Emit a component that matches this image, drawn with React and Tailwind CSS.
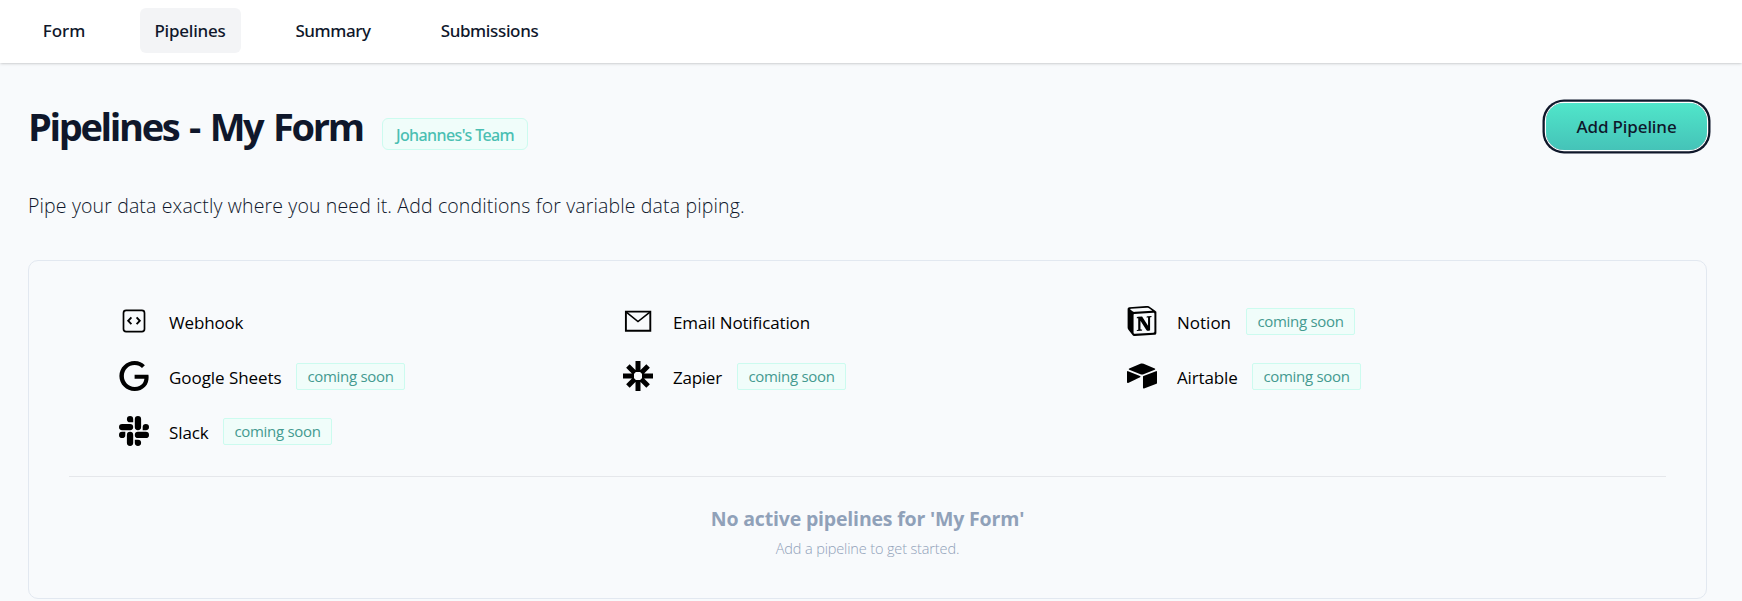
import { SiNotion, SiAirtable, SiSlack, SiGoogle } from 'react-icons/si';

function WebhookIcon() {
  return (
    <svg viewBox="0 0 30 30" className="mb-0.5 size-[30px]" fill="none" stroke="currentColor" strokeWidth="1.7">
      <rect x="4.5" y="4.3" width="21" height="21.4" rx="2.6" />
      <path d="M12.4 11.4 9.2 14.8l3.2 3.4M17.6 11.4l3.2 3.4-3.2 3.4" strokeWidth="1.9" />
    </svg>
  );
}

function EmailIcon() {
  return (
    <svg viewBox="0 0 30 30" className="mb-0.5 size-[30px]" fill="none" stroke="currentColor" strokeWidth="1.9">
      <path d="M2.9 5.6h24.4v19.2H2.9z" />
      <path d="M3.3 6.2 15 15.6 26.9 6.2" strokeWidth="1.6" />
    </svg>
  );
}

function ZapierIcon() {
  return (
    <svg viewBox="0 0 30 30" className="mb-0.5 size-[30px]" fill="none" stroke="currentColor" strokeWidth="5">
      <path d="M15 0v11M15 19v11M0 15h11M19 15h11M4.9 4.9l7 7M18.1 18.1l7 7M25.1 4.9l-7 7M11.9 18.1l-7 7" />
    </svg>
  );
}

const tabs = [
  { label: 'Form', box: 'w-[72px]' },
  { label: 'Pipelines', box: 'w-[101px] rounded-md bg-gray-100 tracking-[-0.21px]' },
  { label: 'Summary', box: 'w-[106px] tracking-[-0.42px]' },
  { label: 'Submissions', box: 'w-[128px] tracking-[-0.36px]' },
];

const integrations = [
  { name: 'Webhook', Icon: WebhookIcon, label: 'tracking-[-0.15px]' },
  { name: 'Email Notification', Icon: EmailIcon, label: 'tracking-[-0.15px]' },
  { name: 'Notion', Icon: SiNotion, label: 'w-[69px]', soon: true },
  { name: 'Google Sheets', Icon: SiGoogle, label: 'w-[127px] tracking-[-0.05px]', soon: true },
  { name: 'Zapier', Icon: ZapierIcon, label: 'w-[64px] tracking-[-0.25px]', soon: true },
  { name: 'Airtable', Icon: SiAirtable, label: 'w-[75px] tracking-[-0.13px]', soon: true },
  { name: 'Slack', Icon: SiSlack, label: 'w-[54px] tracking-[-0.1px]', soon: true },
];

export default function App() {
  return (
    <div className="h-[601px] overflow-hidden bg-slate-50 font-['Open_Sans',sans-serif] text-slate-900">
      <nav className="flex h-[63px] items-start bg-white pt-2 pl-7 shadow-[0_1px_3px_0_rgb(0_0_0/0.12),0_1px_2px_-1px_rgb(0_0_0/0.16)]">
        <div className="flex gap-x-[39.5px]">
          {tabs.map((t) => (
            <a
              key={t.label}
              className={`flex h-[45px] items-center justify-center pt-px font-['Noto_Sans',sans-serif] text-[17px] font-medium whitespace-nowrap ${t.box}`}
            >
              {t.label}
            </a>
          ))}
        </div>
      </nav>

      <main className="pr-[35px] pl-7">
        <header className="flex h-[110px] items-start justify-between">
          <div className="flex items-start">
            <h1 className="w-[354px] pt-9 text-[38px] leading-[54px] font-bold tracking-[-2.35px] whitespace-nowrap [word-spacing:3.2px]">
              Pipelines - My Form
            </h1>
            <span className="mt-[55px] flex h-8 w-[146px] items-center justify-center rounded-md border border-[#ccfbef] bg-[#f0fdfa] pt-px font-['Noto_Sans',sans-serif] text-[16px] font-medium tracking-[-0.6px] whitespace-nowrap text-[#4abfb2]">
              Johannes's Team
            </span>
          </div>
          <button className="mt-10 flex h-[47px] w-[161px] items-center justify-center rounded-[18px] bg-linear-to-b from-[#50e6ca] to-[#45c3b8] pt-px font-['Noto_Sans',sans-serif] text-[17px] font-medium tracking-[-0.12px] whitespace-nowrap shadow-[0_0_0_1.2px_#fff,0_0_0_3.5px_#0f172a]">
            Add Pipeline
          </button>
        </header>

        <p className="pt-[19px] text-[19.5px] leading-7 font-light tracking-[0.14px] whitespace-nowrap text-slate-900">
          Pipe your data exactly where you need it. Add conditions for variable data piping.
        </p>

        <section className="mt-10 h-[339px] rounded-[10px] border border-slate-200 px-10 text-black">
          <ul className="grid grid-cols-[504px_504px_1fr] pt-[33px] pl-[50px]">
            {integrations.map(({ name, Icon, label, soon }) => (
              <li key={name} className="flex h-[55px] items-center">
                <Icon className="mb-0.5 size-[30px]" />
                <span className={`ml-5 pt-0.5 text-[17px] whitespace-nowrap ${label}`}>{name}</span>
                {soon && (
                  <span className="flex h-[27px] w-[109px] items-center justify-center rounded-[2px] border border-[#ccfbef] bg-[#f0fdfa] text-[15px] tracking-[-0.3px] whitespace-nowrap text-[#449a90]">
                    coming soon
                  </span>
                )}
              </li>
            ))}
          </ul>
          <div className="mt-[17px] border-t border-gray-200 pt-7 text-center text-slate-400">
            <h2 className="text-[19.5px] leading-7 font-bold tracking-[-0.18px]">No active pipelines for 'My Form'</h2>
            <p className="mt-1 text-[14.5px] leading-6 font-light tracking-[-0.14px]">Add a pipeline to get started.</p>
          </div>
        </section>
      </main>
    </div>
  );
}
